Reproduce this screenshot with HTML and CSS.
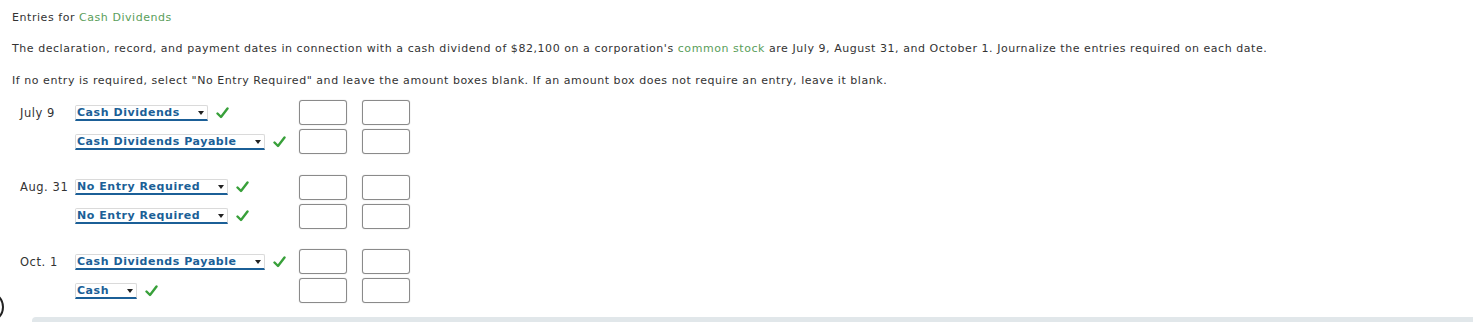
FILE: index.html
```html
<!DOCTYPE html>
<html>
<head>
    <link rel="stylesheet" href="styles.css">
</head>
<body>
    <div class="page">
        <div class="title">Entries for <span class="term">Cash Dividends</span></div>
        <p class="text">The declaration, record, and payment dates in connection with a cash dividend of $82,100 on a corporation's <span class="term">common stock</span> are July 9, August 31, and October 1. Journalize the entries required on each date.</p>
        <p class="text">If no entry is required, select "No Entry Required" and leave the amount boxes blank. If an amount box does not require an entry, leave it blank.</p>

        <div class="journal">
            <!-- July 9 -->
            <div class="entry">
                <div class="row">
                    <span class="date">July 9</span>
                    <span class="account"><span class="pick">Cash Dividends</span><span class="ok"></span></span>
                    <input class="amount" type="text">
                    <input class="amount" type="text">
                </div>
                <div class="row">
                    <span class="date"></span>
                    <span class="account"><span class="pick">Cash Dividends Payable</span><span class="ok"></span></span>
                    <input class="amount" type="text">
                    <input class="amount" type="text">
                </div>
            </div>

            <!-- Aug. 31 -->
            <div class="entry">
                <div class="row">
                    <span class="date">Aug. 31</span>
                    <span class="account"><span class="pick">No Entry Required</span><span class="ok"></span></span>
                    <input class="amount" type="text">
                    <input class="amount" type="text">
                </div>
                <div class="row">
                    <span class="date"></span>
                    <span class="account"><span class="pick">No Entry Required</span><span class="ok"></span></span>
                    <input class="amount" type="text">
                    <input class="amount" type="text">
                </div>
            </div>

            <!-- Oct. 1 -->
            <div class="entry">
                <div class="row">
                    <span class="date">Oct. 1</span>
                    <span class="account"><span class="pick">Cash Dividends Payable</span><span class="ok"></span></span>
                    <input class="amount" type="text">
                    <input class="amount" type="text">
                </div>
                <div class="row">
                    <span class="date"></span>
                    <span class="account"><span class="pick">Cash</span><span class="ok"></span></span>
                    <input class="amount" type="text">
                    <input class="amount" type="text">
                </div>
            </div>
        </div>

        <div class="footer-bar"></div>
    </div>
    <div class="side-ring"></div>
</body>
</html>
```

FILE: styles.css
```css
body {
    margin: 0;
    background: #fff;
    font-family: "DejaVu Sans", Verdana, sans-serif;
    font-size: 11px;
    line-height: 14px;
    letter-spacing: 0.55px;
    color: #333;
    overflow: hidden;
}

.page {
    padding: 11px 0 0 12px;
}

.term {
    color: #5a9e5a;
}

.text {
    margin: 17px 0 0;
}

.text + .text {
    margin-top: 18px;
}

.journal {
    margin-top: 12px;
    padding-left: 8px;
}

.entry {
    display: flex;
    flex-direction: column;
    gap: 4px;
}

.entry + .entry {
    margin-top: 20.5px;
}

.row {
    display: flex;
    align-items: center;
    height: 25px;
}

.date {
    width: 55px;
    font-size: 11.5px;
}

.account {
    width: 224px;
    display: flex;
    align-items: center;
}

.pick {
    position: relative;
    display: inline-block;
    height: 13px;
    line-height: 13px;
    padding: 0 27px 0 1px;
    border: 1px solid #dadada;
    border-bottom: 2px solid #1b5f97;
    border-radius: 2px 2px 0 0;
    font-weight: bold;
    color: #1b5f97;
    white-space: nowrap;
}

.pick::after {
    content: "";
    position: absolute;
    right: 3px;
    top: 5px;
    border-left: 3px solid transparent;
    border-right: 3px solid transparent;
    border-top: 4px solid #222;
}

.ok {
    width: 13px;
    height: 12px;
    margin-left: 8px;
    background: no-repeat center / contain;
    background-image: url("data:image/svg+xml;utf8,<svg xmlns='http://www.w3.org/2000/svg' viewBox='0 0 13 12'><path d='M1.5 6.5 L5 10 L11.5 1.5' fill='none' stroke='%2338a03a' stroke-width='2.4' stroke-linecap='round' stroke-linejoin='round'/></svg>");
}

.amount {
    box-sizing: border-box;
    width: 48px;
    height: 25px;
    margin: 0;
    padding: 0 4px;
    border: 1px solid #8a8a8a;
    border-radius: 3px;
    box-shadow: 0 0 1px #aaa;
    font: inherit;
}

.amount + .amount {
    margin-left: 15px;
}

.footer-bar {
    margin: 14px 0 0 20px;
    height: 20px;
    background: #e1e7ea;
    border-radius: 4px 0 0 0;
}

.side-ring {
    position: absolute;
    left: -28px;
    top: 291px;
    width: 28px;
    height: 28px;
    border: 2px solid #222;
    border-radius: 50%;
}
```
